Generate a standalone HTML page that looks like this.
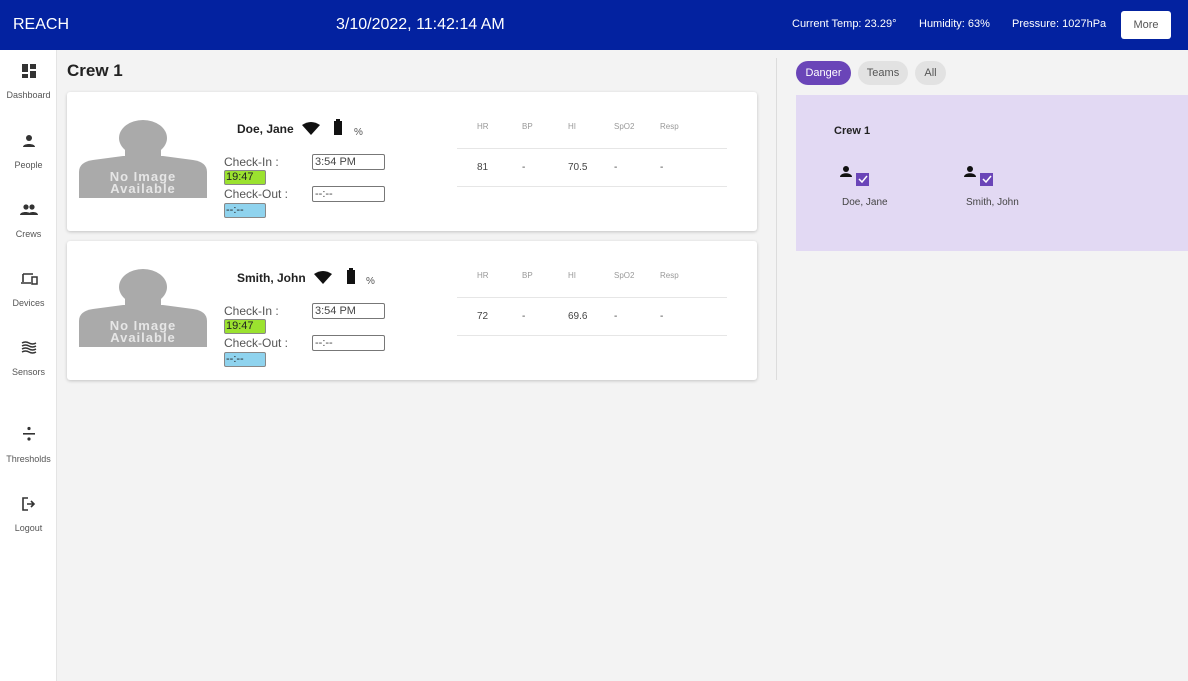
<!DOCTYPE html>
<html><head><meta charset="utf-8"><style>
*{box-sizing:border-box;margin:0;padding:0}
body{width:1188px;height:681px;overflow:hidden;background:#f3f3f3;font-family:"Liberation Sans",sans-serif;position:relative;color:#222}
.hdr{position:absolute;left:0;top:0;width:1188px;height:50px;background:#0322a0;color:#fff}
.abs{position:absolute}
.side{position:absolute;left:0;top:50px;width:57px;height:631px;background:#fff;border-right:1px solid #e4e4e4}
.nav{position:absolute;left:0;width:57px;text-align:center;font-size:9px;color:#555}
.nav svg{display:block;margin:0 auto 12px}
.card{position:absolute;left:67px;width:690px;height:139px;background:#fff;box-shadow:0 1px 3px rgba(0,0,0,.2);border-radius:3px}
.ph{position:absolute;left:12px;top:28px}
.name{position:absolute;font-size:12px;font-weight:bold}
.lbl{position:absolute;font-size:12px;color:#555}
.inp{position:absolute;width:73px;height:16px;border:1px solid #777;border-radius:2px;font-size:11px;color:#444;padding-left:2px;line-height:14px}
.tag{position:absolute;width:42px;height:15px;border:1px solid #888;border-radius:2px;font-size:11px;line-height:13px;padding-left:1px}
.th{position:absolute;font-size:8px;color:#999}
.td{position:absolute;font-size:10px;color:#444}
.ln{position:absolute;height:1px;background:#e6e6e6;width:270px}
.chip{position:absolute;top:61px;height:24px;border-radius:12px;font-size:11px;line-height:24px;text-align:center}
</style></head><body>
<div class="hdr">
<div class="abs" style="left:13px;top:16px;font-size:16px">REACH</div>
<div class="abs" style="left:336px;top:16px;font-size:16px">3/10/2022, 11:42:14 AM</div>
<div class="abs" style="left:792px;top:18px;font-size:11px">Current Temp: 23.29°</div>
<div class="abs" style="left:919px;top:18px;font-size:11px">Humidity: 63%</div>
<div class="abs" style="left:1012px;top:18px;font-size:11px">Pressure: 1027hPa</div>
<div class="abs" style="left:1121px;top:11px;width:50px;height:28px;background:#fff;border-radius:3px;color:#555;font-size:11px;line-height:28px;text-align:center">More</div>
</div>
<div class="side">
<div class="nav" style="top:14px"><svg width="14" height="14" viewBox="0 0 14 14"><rect x="0" y="0" width="6" height="8" fill="#333"/><rect x="8" y="0" width="6" height="5" fill="#333"/><rect x="0" y="10" width="6" height="4" fill="#333"/><rect x="8" y="7" width="6" height="7" fill="#333"/></svg>Dashboard</div>
<div class="nav" style="top:84px"><svg width="14" height="14" viewBox="0 0 14 14"><circle cx="7" cy="4" r="3" fill="#333"/><path d="M1 13c0-4 12-4 12 0z" fill="#333"/></svg>People</div>
<div class="nav" style="top:153px"><svg width="18" height="14" viewBox="0 0 18 14"><circle cx="6" cy="4" r="2.6" fill="#333"/><circle cx="12" cy="4" r="2.6" fill="#333"/><path d="M0 12c0-4 11-4 11 0zM8 12c0-4 10-4 10 0z" fill="#333"/></svg>Crews</div>
<div class="nav" style="top:222px"><svg width="18" height="14" viewBox="0 0 18 14"><path d="M3 2h10M3 2v8M1 11h10" stroke="#333" stroke-width="1.6" fill="none"/><rect x="12" y="5" width="5" height="7" stroke="#333" stroke-width="1.5" fill="none"/></svg>Devices</div>
<div class="nav" style="top:291px"><svg width="16" height="14" viewBox="0 0 16 14"><path d="M1 2q3.5-2 7 0t7 0M1 5q3.5-2 7 0t7 0M1 8q3.5-2 7 0t7 0M1 11q3.5-2 7 0t7 0" stroke="#333" stroke-width="1.4" fill="none"/></svg>Sensors</div>
<div class="nav" style="top:376px"><svg width="14" height="16" viewBox="0 0 14 16"><circle cx="7" cy="2.5" r="1.6" fill="#333"/><rect x="1" y="7" width="12" height="1.6" fill="#333"/><circle cx="7" cy="13" r="1.6" fill="#333"/></svg>Thresholds</div>
<div class="nav" style="top:447px"><svg width="16" height="14" viewBox="0 0 16 14"><path d="M7 1H2v12h5" stroke="#333" stroke-width="1.6" fill="none"/><path d="M6 7h6M10 4l3 3-3 3" stroke="#333" stroke-width="1.6" fill="none"/></svg>Logout</div>
</div>
<div class="abs" style="left:67px;top:61px;font-size:17px;font-weight:bold">Crew 1</div>

<div class="card" style="top:92px">
<svg class="ph" width="128" height="78" viewBox="0 0 128 78"><ellipse cx="64" cy="18" rx="24" ry="18" fill="#aaa"/><rect x="46" y="26" width="36" height="20" fill="#aaa"/><path d="M0 78V52q0-10 14-12l30-4h40l30 4q14 2 14 12v26z" fill="#aaa"/><text x="64" y="61" font-size="13" font-weight="bold" fill="#e6e6e6" text-anchor="middle" font-family="Liberation Sans" letter-spacing="1">No Image</text><text x="64" y="73" font-size="13" font-weight="bold" fill="#e6e6e6" text-anchor="middle" font-family="Liberation Sans" letter-spacing="1">Available</text></svg>
<div class="name" style="left:170px;top:30px">Doe, Jane</div>
<svg class="abs" style="left:235px;top:30px" width="18" height="13" viewBox="0 0 18 13"><path d="M0 3Q9-3 18 3L9 13z" fill="#111"/></svg>
<svg class="abs" style="left:267px;top:27px" width="8" height="16"><rect x="2" y="0" width="4" height="2" fill="#111"/><rect x="0" y="2" width="8" height="14" fill="#111"/></svg>
<div class="abs" style="left:287px;top:35px;font-size:10px;color:#555">%</div>
<div class="lbl" style="left:157px;top:63px">Check-In :</div>
<div class="inp" style="left:245px;top:62px">3:54 PM</div>
<div class="tag" style="left:157px;top:78px;background:#9be22f">19:47</div>
<div class="lbl" style="left:157px;top:95px">Check-Out :</div>
<div class="inp" style="left:245px;top:94px">--:--</div>
<div class="tag" style="left:157px;top:111px;background:#8fd3ee">--:--</div>
<div class="th" style="left:410px;top:30px">HR</div><div class="th" style="left:455px;top:30px">BP</div><div class="th" style="left:501px;top:30px">HI</div><div class="th" style="left:547px;top:30px">SpO2</div><div class="th" style="left:593px;top:30px">Resp</div>
<div class="ln" style="left:390px;top:56px"></div>
<div class="td" style="left:410px;top:70px">81</div><div class="td" style="left:455px;top:70px">-</div><div class="td" style="left:501px;top:70px">70.5</div><div class="td" style="left:547px;top:70px">-</div><div class="td" style="left:593px;top:70px">-</div>
<div class="ln" style="left:390px;top:94px"></div>
</div>

<div class="card" style="top:241px">
<svg class="ph" width="128" height="78" viewBox="0 0 128 78"><ellipse cx="64" cy="18" rx="24" ry="18" fill="#aaa"/><rect x="46" y="26" width="36" height="20" fill="#aaa"/><path d="M0 78V52q0-10 14-12l30-4h40l30 4q14 2 14 12v26z" fill="#aaa"/><text x="64" y="61" font-size="13" font-weight="bold" fill="#e6e6e6" text-anchor="middle" font-family="Liberation Sans" letter-spacing="1">No Image</text><text x="64" y="73" font-size="13" font-weight="bold" fill="#e6e6e6" text-anchor="middle" font-family="Liberation Sans" letter-spacing="1">Available</text></svg>
<div class="name" style="left:170px;top:30px">Smith, John</div>
<svg class="abs" style="left:247px;top:30px" width="18" height="13" viewBox="0 0 18 13"><path d="M0 3Q9-3 18 3L9 13z" fill="#111"/></svg>
<svg class="abs" style="left:280px;top:27px" width="8" height="16"><rect x="2" y="0" width="4" height="2" fill="#111"/><rect x="0" y="2" width="8" height="14" fill="#111"/></svg>
<div class="abs" style="left:299px;top:35px;font-size:10px;color:#555">%</div>
<div class="lbl" style="left:157px;top:63px">Check-In :</div>
<div class="inp" style="left:245px;top:62px">3:54 PM</div>
<div class="tag" style="left:157px;top:78px;background:#9be22f">19:47</div>
<div class="lbl" style="left:157px;top:95px">Check-Out :</div>
<div class="inp" style="left:245px;top:94px">--:--</div>
<div class="tag" style="left:157px;top:111px;background:#8fd3ee">--:--</div>
<div class="th" style="left:410px;top:30px">HR</div><div class="th" style="left:455px;top:30px">BP</div><div class="th" style="left:501px;top:30px">HI</div><div class="th" style="left:547px;top:30px">SpO2</div><div class="th" style="left:593px;top:30px">Resp</div>
<div class="ln" style="left:390px;top:56px"></div>
<div class="td" style="left:410px;top:70px">72</div><div class="td" style="left:455px;top:70px">-</div><div class="td" style="left:501px;top:70px">69.6</div><div class="td" style="left:547px;top:70px">-</div><div class="td" style="left:593px;top:70px">-</div>
<div class="ln" style="left:390px;top:94px"></div>
</div>

<div class="abs" style="left:776px;top:58px;width:1px;height:322px;background:#dcdcdc"></div>
<div class="chip" style="left:796px;width:55px;background:#6a45b8;color:#fff">Danger</div>
<div class="chip" style="left:858px;width:50px;background:#e2e2e2;color:#555">Teams</div>
<div class="chip" style="left:915px;width:31px;background:#e2e2e2;color:#555">All</div>
<div class="abs" style="left:796px;top:95px;width:392px;height:156px;background:#e2d9f3"></div>
<div class="abs" style="left:834px;top:125px;font-size:11px;font-weight:bold">Crew 1</div>
<svg class="abs" style="left:840px;top:165px" width="30" height="22"><circle cx="6" cy="4" r="3" fill="#111"/><path d="M0 12c0-5 12-5 12 0z" fill="#111"/><rect x="16" y="8" width="13" height="13" fill="#6a45b8"/><path d="M19 14l3 3 5-6" stroke="#fff" stroke-width="1.5" fill="none"/></svg>
<svg class="abs" style="left:964px;top:165px" width="30" height="22"><circle cx="6" cy="4" r="3" fill="#111"/><path d="M0 12c0-5 12-5 12 0z" fill="#111"/><rect x="16" y="8" width="13" height="13" fill="#6a45b8"/><path d="M19 14l3 3 5-6" stroke="#fff" stroke-width="1.5" fill="none"/></svg>
<div class="abs" style="left:842px;top:197px;font-size:10px;color:#444">Doe, Jane</div>
<div class="abs" style="left:966px;top:197px;font-size:10px;color:#444">Smith, John</div>
</body></html>
